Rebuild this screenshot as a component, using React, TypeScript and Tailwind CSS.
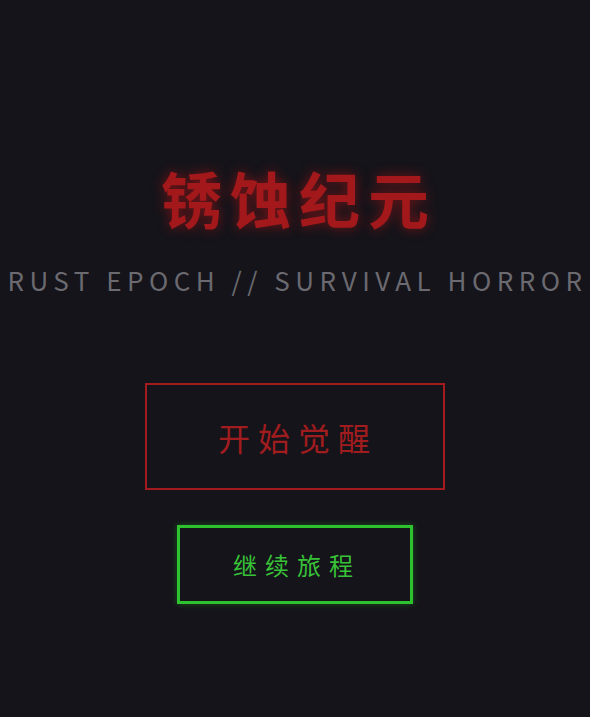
export default function App() {
  return (
    <div
      className="h-[717px] w-full overflow-hidden bg-[#15141a] flex flex-col items-center"
      style={{ fontFamily: '"Noto Sans CJK SC", "Noto Sans", sans-serif' }}
    >
      {/* title */}
      <h1 className="mt-[156px] pl-[8px] text-[61px] leading-[84px] font-bold tracking-[8px] text-[#a3191b] [text-shadow:0_0_12px_rgba(200,20,20,0.55)]">
        锈蚀纪元
      </h1>
      <p className="mt-[22px] pl-[5px] whitespace-nowrap text-[26px] leading-[36px] tracking-[5.5px] text-[#6a6a70] font-normal">
        RUST EPOCH // SURVIVAL HORROR
      </p>

      {/* menu */}
      <button className="mt-[85px] w-[300px] h-[107px] border-2 border-[#a31b1d] text-[#a01c1e] text-[32px] tracking-[8px] pl-[6px] font-normal">
        开始觉醒
      </button>
      <button className="mt-[35px] w-[236px] h-[79px] border-[3px] border-[#2fc22f] text-[#38c238] text-[24px] tracking-[8px] pl-[4px] [box-shadow:0_0_6px_rgba(50,200,50,0.35)]">
        继续旅程
      </button>
    </div>
  );
}
